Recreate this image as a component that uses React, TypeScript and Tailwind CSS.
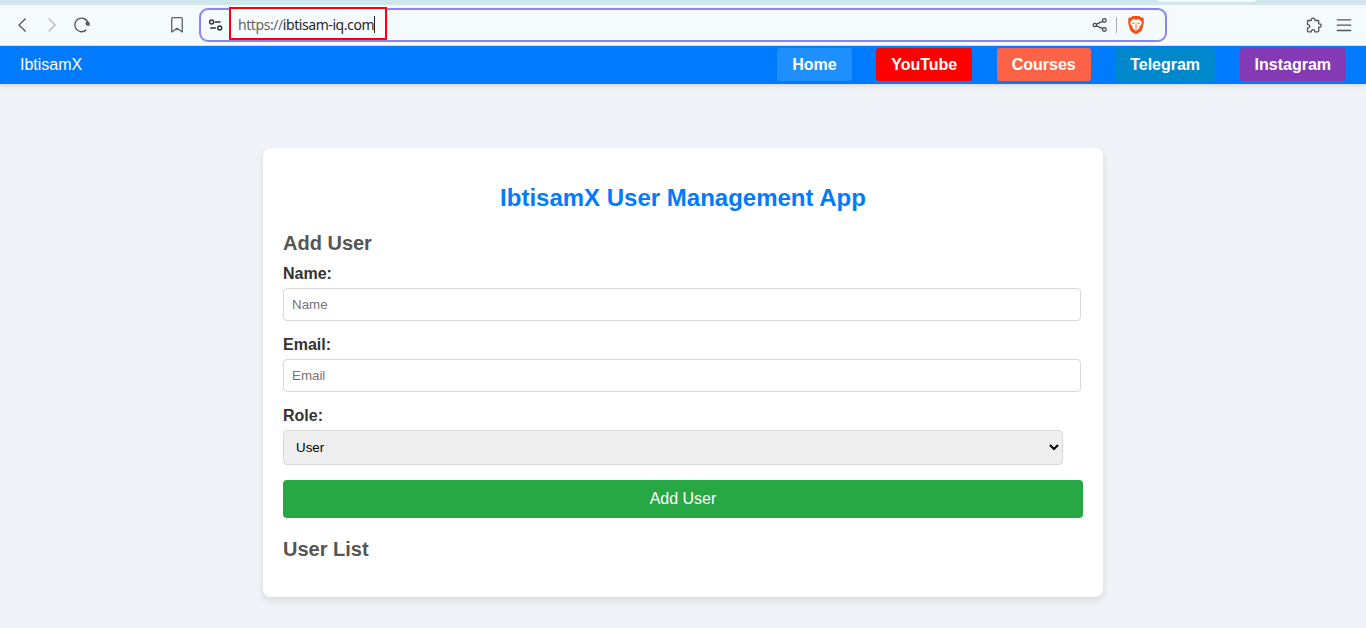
import React from "react";

const links = [
  { label: "Home", style: "bg-[#1e90ff]" },
  { label: "YouTube", style: "bg-[#ff0000]" },
  { label: "Courses", style: "bg-[#ff6347]" },
  { label: "Telegram", style: "bg-[#0088cc]" },
  { label: "Instagram", style: "bg-[#833ab4]" },
];

function BrowserBar() {
  return (
    <div className="h-[46px] shrink-0 border-b border-[#d9e3e7] bg-[#f5fafd]">
      <div className="flex h-[5px] bg-[#cfe7eb] pl-[1158px]">
        <div className="h-[2px] w-[98px] rounded-b-[3px] bg-[#f5fafd]" />
      </div>
      <div className="flex h-10 items-center">
        <svg className="ml-[14px] h-5 w-4 shrink-0" viewBox="0 0 16 20" fill="none" stroke="#50565a" strokeWidth="1.3">
          <path d="M11.6 3.5 5 10l6.6 6.5" />
        </svg>
        <svg className="ml-[14px] h-5 w-4 shrink-0" viewBox="0 0 16 20" fill="none" stroke="#b4babd" strokeWidth="1.3">
          <path d="M4.6 3.5 11.2 10l-6.6 6.5" />
        </svg>
        <svg className="ml-[12px] h-5 w-5 shrink-0" viewBox="0 0 20 20" fill="none" stroke="#50565a" strokeWidth="1.4">
          <path d="M14.4 14.8A6.8 6.8 0 1 1 16.1 8" />
          <path d="M13.5 8.6a2.1 2.1 0 0 1 4.2 0v2.1h-2a2.1 2.1 0 0 1-2.2-2.1Z" fill="#50565a" stroke="none" />
        </svg>
        <svg className="ml-[77px] h-5 w-4 shrink-0" viewBox="0 0 16 20" fill="none" stroke="#5c6265" strokeWidth="1.3" strokeLinejoin="round">
          <path d="M2.7 4a1.3 1.3 0 0 1 1.3-1.3h8A1.3 1.3 0 0 1 13.3 4v13L8 13.3 2.7 17Z" />
        </svg>
        <div className="ml-[14px] flex h-[34px] w-[968px] shrink-0 items-center rounded-[9px] border-2 border-[#8b86ee]">
          <svg className="ml-[7px] h-4 w-4 shrink-0" viewBox="0 0 16 16" fill="none" stroke="#2b3033" strokeWidth="1.4">
            <circle cx="3.6" cy="5" r="2" />
            <path d="M6.8 5h5.7M2.2 11h5.7" />
            <circle cx="11.7" cy="11" r="2" />
          </svg>
          <div className="-mt-[6px] -mb-[3px] ml-[5px] flex h-[33px] w-[158px] shrink-0 items-center border-2 border-[#ff0000] bg-[#f8fcfe] pl-[7px] pt-[2px]">
            <span className="w-[136px] whitespace-nowrap font-['Noto_Sans',sans-serif] text-[14px] leading-5 tracking-[-0.43px] text-[#24282b]">
              <span className="text-[#626769]">https://</span>ibtisam-iq.com
            </span>
            <span className="h-[17px] w-px bg-[#202020]" />
          </div>
          <svg className="ml-[705px] h-4 w-4 shrink-0" viewBox="0 0 16 16" fill="none" stroke="#43494d" strokeWidth="1.3">
            <circle cx="2.9" cy="8" r="1.7" />
            <circle cx="12.3" cy="3.5" r="1.8" />
            <circle cx="12.3" cy="12.5" r="1.8" />
            <path d="m4.5 7.2 6.2-2.9M4.5 8.8l6.2 2.9" />
          </svg>
          <span className="ml-[8px] h-4 w-px bg-[#a8adb0]" />
          <svg className="ml-[10px] h-5 w-[18px] shrink-0" viewBox="0 0 18 20">
            <path d="m5.5 1h7l1.5 1.5 2-.1 1 2.5-.5 1.6.4 1.3-2 7.3c-.4 1.2-4 3.5-5.9 4.2-1.9-.7-5.5-3-5.9-4.2l-2-7.3.4-1.3L1 4.9l1-2.5 2 .1Z" fill="#fb4d0f" />
            <path d="M6 4.2 9 4.8l3-.6 2.8 2.7-.6 2.8-2 2.2.3 1.4L9 15.7l-3.5-2.4.3-1.4-2-2.2-.6-2.8Z" fill="#fff" />
            <path d="M5.2 7.4 7.6 8 7 8.9 5.4 8.5Zm7.6 0L10.4 8l.6.9 1.6-.4ZM8.7 7.6h.6v3l.9.7L9 12.1l-1.2-.8.9-.7ZM7.4 13.3l1.6-.5 1.6.5-1.6.4Z" fill="#fb4d0f" />
          </svg>
        </div>
        <svg className="ml-[138px] h-[18px] w-[18px] shrink-0" viewBox="0 0 18 18" fill="none" stroke="#50565a" strokeWidth="1.3" strokeLinejoin="round">
          <path d="M3.2 4.5h3C6 3.1 6.9 2.2 8.1 2.2s2.1.9 1.9 2.3h3q.7 0 .7.7v2.6c1.6-.1 2.5.5 2.5 1.7s-.9 1.8-2.5 1.7v3.9q0 .7-.7.7H9.8c.2-1.4-.6-2.1-1.7-2.1s-1.9.7-1.7 2.1H3.2q-.7 0-.7-.7v-3.2c1.5.2 2.2-.5 2.2-1.6s-.7-1.8-2.2-1.7V5.2q0-.7.7-.7Z" />
        </svg>
        <svg className="ml-[13px] h-4 w-4 shrink-0" viewBox="0 0 16 16" stroke="#50565a" strokeWidth="1.3">
          <path d="M.8 2.9h14.4M.8 8.2h14.4M.8 13.5h14.4" />
        </svg>
      </div>
    </div>
  );
}

function TextField({ label }: { label: string }) {
  return (
    <label className="mb-[15px] block font-bold text-[#333]">
      <span className="mb-[5px] block h-[18px] leading-[18px]">{label}:</span>
      <input
        placeholder={label}
        className="block h-[33px] w-[798px] rounded border border-[#d8d8d8] bg-white px-2 text-[13.333px] font-normal leading-[15px] placeholder:text-[#757575]"
      />
    </label>
  );
}

export default function App() {
  return (
    <div className="flex h-[628px] w-[1366px] flex-col overflow-hidden bg-[#f0f4f8] font-['Liberation_Sans',Arial,sans-serif] text-base text-[#333]">
      <BrowserBar />
      <nav className="flex h-[38px] shrink-0 items-center justify-between bg-[#007bff] px-5 text-white shadow-[0_2px_4px_rgba(0,0,0,0.1)]">
        <span className="leading-[18px]">IbtisamX</span>
        <div className="flex gap-[24.45px] pb-px">
          {links.map(({ label, style }) => (
            <a key={label} href="#" className={`flex h-[33px] shrink-0 items-center rounded-[3px] px-[15px] font-bold leading-[18px] ${style}`}>
              {label}
            </a>
          ))}
        </div>
      </nav>
      <main className="mx-auto mt-16 h-[449px] w-[840px] shrink-0 rounded-lg bg-white px-5 pt-9 shadow-[0_4px_8px_rgba(0,0,0,0.1)]">
        <h1 className="text-center text-2xl font-bold leading-[27px] text-[#007bff]">IbtisamX User Management App</h1>
        <h2 className="mb-[10px] mt-[21px] text-xl font-bold leading-[23px] text-[#555]">Add User</h2>
        <form onSubmit={(e) => e.preventDefault()}>
          <TextField label="Name" />
          <TextField label="Email" />
          <label className="block font-bold">
            <span className="mb-[5px] block h-[18px] leading-[18px]">Role:</span>
            <select className="block h-[35px] w-[780px] rounded border border-[#d8d8d8] bg-[#efefef] p-2 text-[13.333px] font-normal text-black">
              <option>User</option>
              <option>Admin</option>
            </select>
          </label>
          <button className="mt-[15px] block h-[38px] w-full rounded bg-[#28a745] text-base leading-[18px] text-white">Add User</button>
        </form>
        <h2 className="mt-5 text-xl font-bold leading-[23px] text-[#555]">User List</h2>
      </main>
    </div>
  );
}
